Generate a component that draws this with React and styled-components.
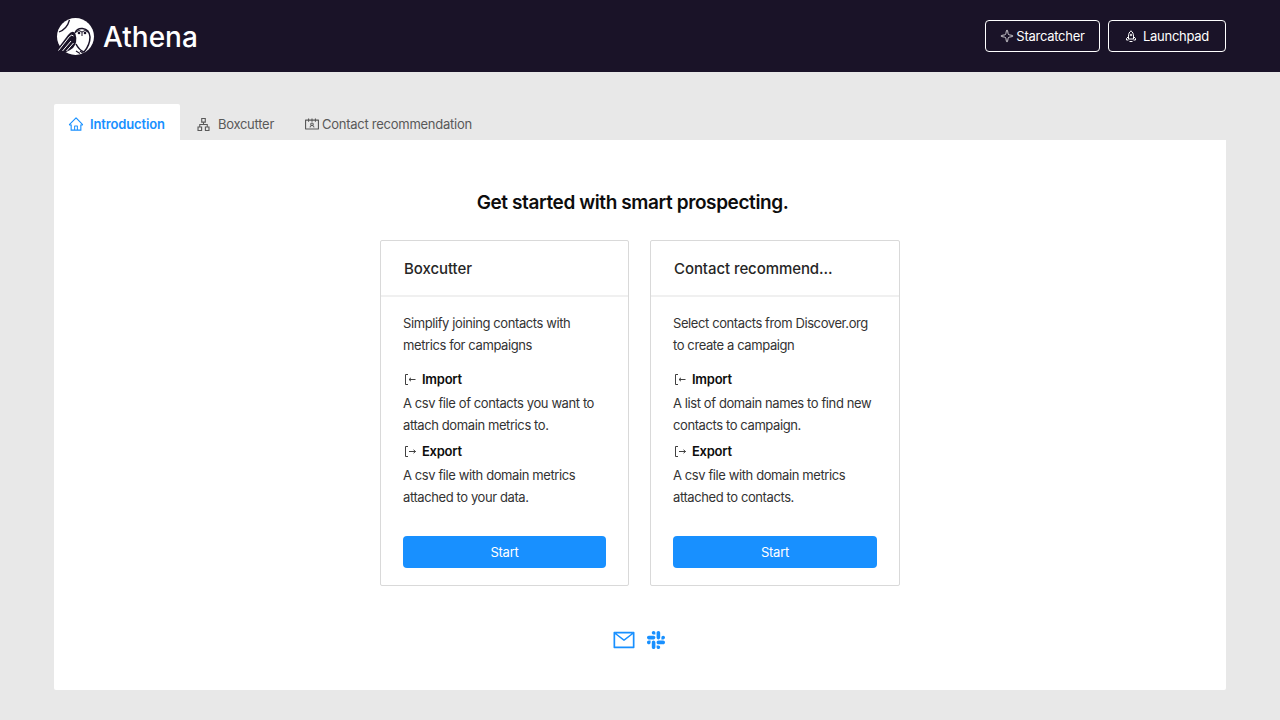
import React from 'react';
import styled, { createGlobalStyle } from 'styled-components';
import { Sparkle } from 'lucide-react';
import {
  AiOutlineHome,
  AiOutlineApartment,
  AiOutlineContacts,
  AiOutlineMail,
  AiOutlineSlack,
} from 'react-icons/ai';

const GlobalStyle = createGlobalStyle`
  * { box-sizing: border-box; }
  html, body { margin: 0; padding: 0; }
  body {
    background: #e8e8e8;
    font-family: Inter, "Liberation Sans", sans-serif;
    color: #262626;
  }
`;

const Page = styled.div`
  width: 1280px;
  height: 720px;
  overflow: hidden;
`;

const Header = styled.header`
  height: 72px;
  background: #1a1328;
  display: flex;
  align-items: center;
  justify-content: space-between;
  padding: 0 54px 0 56px;
`;

const Brand = styled.div`
  display: flex;
  align-items: center;
  gap: 7px;
  color: #fff;
  font-size: 28px;
  line-height: 38px;
  font-weight: 500;
`;

const BrandName = styled.span`
  padding-top: 1px;
`;

const HeaderActions = styled.div`
  display: flex;
  gap: 8px;
`;

const HeaderButton = styled.button`
  height: 32px;
  width: ${(p) => p.$width}px;
  display: flex;
  align-items: center;
  justify-content: center;
  gap: ${(p) => p.$gap}px;
  background: transparent;
  border: 1px solid #fff;
  border-radius: 4px;
  color: #fff;
  font: 400 13px Inter, sans-serif;
  letter-spacing: -0.02em;
`;

const Main = styled.main`
  padding: 32px 54px 0;
`;

const Tabs = styled.nav`
  display: flex;
  height: 36px;
`;

const Tab = styled.div`
  display: flex;
  align-items: center;
  gap: ${(p) => p.$gap}px;
  padding: 4px ${(p) => p.$right}px 0 ${(p) => p.$left}px;
  font-size: 13px;
  letter-spacing: ${(p) => (p.$active ? '-0.01em' : '-0.02em')};
  font-weight: ${(p) => (p.$active ? 600 : 400)};
  color: ${(p) => (p.$active ? '#1890ff' : '#595959')};
  background: ${(p) => (p.$active ? '#fff' : 'transparent')};
  border-radius: 2px 2px 0 0;
`;

const Panel = styled.section`
  height: 550px;
  background: #fff;
  border-radius: 0 0 2px 2px;
  display: flex;
  flex-direction: column;
  align-items: center;
  padding-top: 52px;
`;

const Heading = styled.h1`
  margin: 0;
  font-size: 19px;
  line-height: 22px;
  font-weight: 600;
  letter-spacing: -0.021em;
  color: #0d0d0d;
  position: relative;
  left: -7.5px;
`;

const Cards = styled.div`
  margin-top: 26px;
  width: 520px;
  display: grid;
  grid-template-columns: 249px 250px;
  gap: 21px;
`;

const Card = styled.article`
  height: 346px;
  border: 1px solid #d9d9d9;
  border-radius: 2px;
  display: flex;
  flex-direction: column;
`;

const CardTitle = styled.div`
  height: 56px;
  flex: none;
  display: flex;
  align-items: center;
  padding-left: 23px;
  border-bottom: 2px solid #f0f0f0;
  font-size: 15px;
  font-weight: 500;
  letter-spacing: -0.005em;
  color: #262626;
`;

const CardBody = styled.div`
  flex: 1;
  display: flex;
  flex-direction: column;
  padding: 15px 22px 17px;
  font-size: 13px;
  line-height: 22px;
  letter-spacing: -0.031em;
  color: #333;
`;

const Text = styled.p`
  margin: 0;
  white-space: nowrap;
`;

const SubHeading = styled.div`
  display: flex;
  align-items: center;
  gap: 6px;
  margin-top: ${(p) => p.$top}px;
  margin-bottom: 2px;
  padding-left: 2px;
  font-weight: 600;
  letter-spacing: -0.02em;
  color: #0d0d0d;
`;

const StartButton = styled.button`
  margin-top: auto;
  height: 32px;
  background: #1890ff;
  border: none;
  border-radius: 4px;
  color: #fff;
  font: 400 13px Inter, sans-serif;
  letter-spacing: -0.02em;
`;

const Contacts = styled.div`
  margin-top: 42px;
  display: flex;
  align-items: center;
  gap: 8px;
  color: #1890ff;
`;

const OwlLogo = () => (
  <svg width="40" height="38" viewBox="0 0 40 38" fill="none">
    <circle cx="19.500" cy="19.500" r="18.500" fill="#fff" />
    {/* moon */}
    <path d="M3 15 Q11 12 13.500 3" stroke="#1a1328" strokeWidth="1.300" />
    {/* wing and tail */}
    <path d="M0 34 L12 18 Q17 12 19.500 17 Q22 25 17 31 Q11 36 2 36.500 Z" fill="#1a1328" />
    <path d="M2.500 33.500 L13.500 19.500 Q16 17 17.500 19 M6.500 34 L15 24 M10.500 34 L17.500 26" stroke="#fff" strokeWidth="1" />
    {/* head and body */}
    <path d="M19 16 Q21 11 26.500 11.500 Q33.500 12.500 34 20 Q34 28 28 35 Q23 33 20 27" stroke="#1a1328" strokeWidth="1.500" />
    <path d="M20 15 Q23 12 26 15 Q29 12 32 15 M26 15 L26 19" stroke="#1a1328" strokeWidth="1" />
    <circle cx="23" cy="16" r="1.300" fill="#1a1328" />
    <circle cx="29" cy="16" r="1.300" fill="#1a1328" />
    <path d="M24 34 L28 37 M20 34 L24 36.500" stroke="#1a1328" strokeWidth="1.200" />
  </svg>
);

const RocketIcon = () => (
  <svg width="12" height="13" viewBox="0 0 12 13" fill="none" stroke="#fff" strokeWidth="1">
    <path d="M6 .8C7.800 2.200 8.500 4 8.500 6.200V9h-5V6.200C3.500 4 4.200 2.200 6 .8Z" />
    <path d="M3.500 6.500 1.500 8.500V10h2M8.500 6.500l2 2V10h-2" />
    <circle cx="6" cy="5" r=".8" />
    <path d="M4.500 11.500h3" />
  </svg>
);

const ImportIcon = () => (
  <svg width="11" height="11" viewBox="0 0 11 11" fill="none" stroke="#404040" strokeWidth="1">
    <path d="M3 .5H.5v10H3" />
    <path d="M10.500 5.500H4M6 3.800 4 5.500l2 1.700" />
  </svg>
);

const ExportIcon = () => (
  <svg width="11" height="11" viewBox="0 0 11 11" fill="none" stroke="#404040" strokeWidth="1">
    <path d="M3 .5H.5v10H3" />
    <path d="M4 5.500h6.500M8.500 3.800l2 1.700-2 1.700" />
  </svg>
);

const cards = [
  {
    title: 'Boxcutter',
    intro: ['Simplify joining contacts with', 'metrics for campaigns'],
    imports: ['A csv file of contacts you want to', 'attach domain metrics to.'],
    exports: ['A csv file with domain metrics', 'attached to your data.'],
  },
  {
    title: 'Contact recommend...',
    intro: ['Select contacts from Discover.org', 'to create a campaign'],
    imports: ['A list of domain names to find new', 'contacts to campaign.'],
    exports: ['A csv file with domain metrics', 'attached to contacts.'],
  },
];

const App = () => (
  <Page>
    <GlobalStyle />
    <Header>
      <Brand>
        <OwlLogo />
        <BrandName>Athena</BrandName>
      </Brand>
      <HeaderActions>
        <HeaderButton $width={115} $gap={2}>
          <Sparkle size={14} strokeWidth={1.300} />
          Starcatcher
        </HeaderButton>
        <HeaderButton $width={118} $gap={6}>
          <RocketIcon />
          Launchpad
        </HeaderButton>
      </HeaderActions>
    </Header>
    <Main>
      <Tabs>
        <Tab $active $left={14} $right={15} $gap={6}>
          <AiOutlineHome size={16} />
          Introduction
        </Tab>
        <Tab $left={16} $right={14} $gap={7}>
          <AiOutlineApartment size={15} />
          Boxcutter
        </Tab>
        <Tab $left={16} $right={15} $gap={2}>
          <AiOutlineContacts size={16} />
          Contact recommendation
        </Tab>
      </Tabs>
      <Panel>
        <Heading>Get started with smart prospecting.</Heading>
        <Cards>
          {cards.map((card) => (
            <Card key={card.title}>
              <CardTitle>{card.title}</CardTitle>
              <CardBody>
                {card.intro.map((line) => <Text key={line}>{line}</Text>)}
                <SubHeading $top={12}><ImportIcon />Import</SubHeading>
                {card.imports.map((line) => <Text key={line}>{line}</Text>)}
                <SubHeading $top={4}><ExportIcon />Export</SubHeading>
                {card.exports.map((line) => <Text key={line}>{line}</Text>)}
                <StartButton>Start</StartButton>
              </CardBody>
            </Card>
          ))}
        </Cards>
        <Contacts>
          <AiOutlineMail size={24} />
          <AiOutlineSlack size={24} />
        </Contacts>
      </Panel>
    </Main>
  </Page>
);

export default App;
